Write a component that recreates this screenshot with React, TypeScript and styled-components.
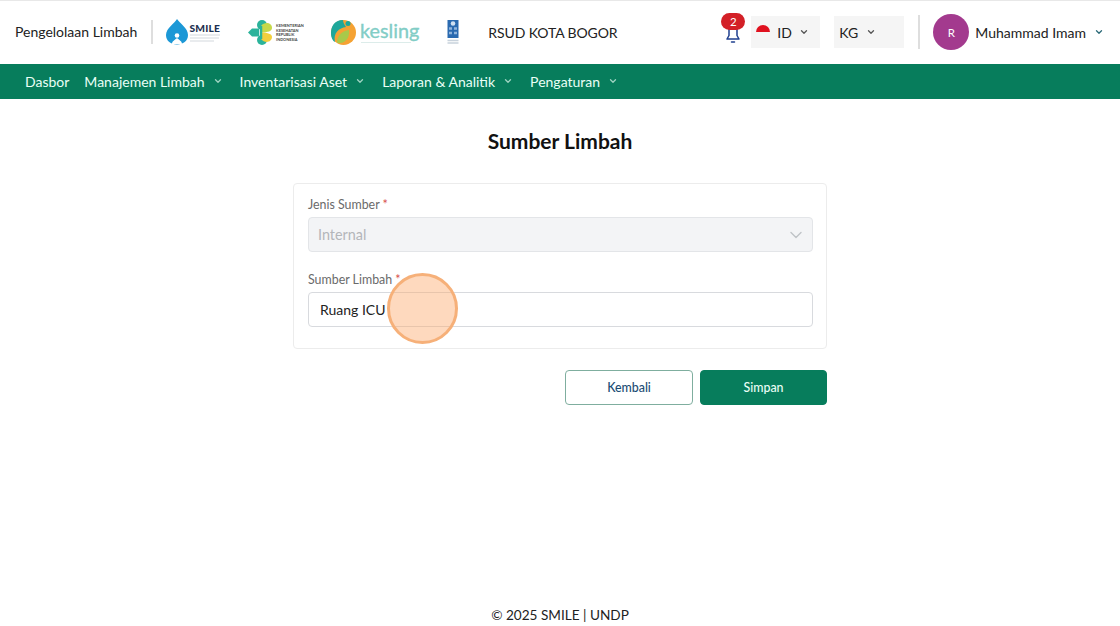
import React from "react";
import styled, { createGlobalStyle } from "styled-components";

const Global = createGlobalStyle`
  html, body { margin: 0; padding: 0; background: #fff; }
  body { font-family: Lato, "Liberation Sans", sans-serif; color: #1d1d1d; }
  * { box-sizing: border-box; }
`;
const Page = styled.div`
  position: relative; width: 1120px; height: 626px; overflow: hidden;
  display: flex; flex-direction: column; background: #fff;
`;
const Header = styled.header`
  height: 64px; flex: none; display: flex; align-items: center;
  border-top: 1px solid #e8e8e8; padding: 0 16px 1px 15px;
`;
const AppName = styled.span`font-size: 14px; line-height: 20px; color: #222; white-space: nowrap;`;
const VLine = styled.span<{ $h: number; $mx: string }>`
  width: 2px; height: ${p => p.$h}px; margin: ${p => p.$mx}; background: #dedede; flex: none;
`;
const LogoSlot = styled.span<{ $w: number; $mr: number }>`
  display: flex; width: ${p => p.$w}px; margin-right: ${p => p.$mr}px; flex: none;
`;
const Hospital = styled.span`font-size: 14px; color: #222; white-space: nowrap; letter-spacing: -0.1px;`;
const Right = styled.div`margin-left: auto; display: flex; align-items: center;`;
const BellWrap = styled.span`
  position: relative; width: 24px; height: 32px; display: flex; align-items: flex-end;
  justify-content: center; margin-right: 6px; padding-bottom: 3px;
`;
const Badge = styled.span`
  position: absolute; top: -3px; left: 0; width: 24px; height: 17px; border-radius: 9px;
  background: #d32027; color: #fff; font-size: 11.5px; line-height: 17px; text-align: center;
`;
const Picker = styled.div<{ $mr: number; $w: number }>`
  width: ${p => p.$w}px; height: 32px; background: #f5f5f5; display: flex; align-items: center;
  padding-left: 5px; margin-right: ${p => p.$mr}px; font-size: 14px; color: #222;
`;
const Flag = styled.span`
  width: 14px; height: 14px; border-radius: 50%; margin-right: 7px;
  background: linear-gradient(#e0121f 50%, #f6f6f6 50%);
`;
const ChevGap = styled.span<{ $w: number }>`width: ${p => p.$w}px; flex: none;`;
const Avatar = styled.span`
  width: 36px; height: 36px; border-radius: 50%; background: #a33a8e; color: #fff;
  display: flex; align-items: center; justify-content: center; font-size: 11.5px; margin-right: 6px;
`;
const UserName = styled.span`font-size: 14px; color: #222; margin-right: 8px; white-space: nowrap;`;
const Nav = styled.nav`
  height: 35px; flex: none; background: #077d5c; display: flex; align-items: center;
  padding: 0 0 1px 25px; color: #eafff6; font-size: 14px;
`;
const NavItem = styled.span<{ $mr: number }>`
  display: flex; align-items: center; gap: 8px; margin-right: ${p => p.$mr}px; white-space: nowrap;
`;
const Main = styled.main`flex: 1; display: flex; flex-direction: column; align-items: center;`;
const Title = styled.h1`
  margin: 30px 0 0; font-size: 21px; line-height: 24px; font-weight: 700; color: #111;
`;
const Card = styled.section`
  width: 534px; height: 166px; margin-top: 30px; border: 1px solid #ececec; border-radius: 4px;
  padding: 12px 13px 0 14px; display: flex; flex-direction: column;
`;
const Label = styled.label`font-size: 12.4px; line-height: 18px; color: #6a6a6a; margin-bottom: 3px;`;
const Star = styled.span`color: #d9534f;`;
const Select = styled.div`
  height: 35px; border: 1px solid #e3e5e8; border-radius: 4px; background: #f3f4f6;
  display: flex; align-items: center; justify-content: space-between; padding: 0 6px 0 9px;
  color: #b3b6ba; font-size: 14.4px; margin-bottom: 19px;
`;
const Input = styled.div`
  height: 35px; border: 1px solid #d8dade; border-radius: 4px; background: #fff;
  display: flex; align-items: center; padding: 0 11px; color: #222; font-size: 14px;
`;
const Actions = styled.div`width: 534px; margin-top: 21px; display: flex; justify-content: flex-end; gap: 7px;`;
const Btn = styled.button<{ $primary?: boolean }>`
  height: 35px; padding: 0 0 1px; width: ${p => (p.$primary ? 127 : 128)}px; border-radius: 4px; font: 500 12.4px Lato, sans-serif;
  border: 1px solid ${p => (p.$primary ? "#077d5c" : "#7fae9f")};
  background: ${p => (p.$primary ? "#077d5c" : "#fff")};
  color: ${p => (p.$primary ? "#eafff6" : "#1c4c74")};
`;
const Footer = styled.footer`
  flex: none; text-align: center; font-size: 13.6px; line-height: 20px; color: #222; height: 21px;
`;
const Cursor = styled.div`
  position: absolute; left: 387px; top: 273px; width: 71px; height: 71px; border-radius: 50%;
  background: rgba(252, 170, 110, 0.45); border: 3px solid #f6b079;
`;

const Chev = ({ c = "#555", s = 10, w = 1.3 }: { c?: string; s?: number; w?: number }) => (
  <svg width={s} height={s} viewBox="0 0 10 10" fill="none" stroke={c} strokeWidth={w} strokeLinecap="round" strokeLinejoin="round">
    <path d="M2.500 3.800 5 6.200 7.500 3.800" />
  </svg>
);
const Smile = () => (
  <svg width="55" height="26" viewBox="0 0 55 26">
    <path d="M11 0C9 4 0 9 0 16 0 22 5 25.500 11 25.500S22 22 22 16C22 9 13.500 4 11 0Z" fill="#1c98d6" />
    <path d="M6 25c0-3 3-4 5-6 2 2 5 3 5 6Z" fill="#fff" /><circle cx="11" cy="16.500" r="2.300" fill="#fff" />
    <text x="23.500" y="12.500" fontFamily="Lato" fontWeight="900" fontSize="10.200" fill="#1d3050" letterSpacing=".2">SMILE</text>
    <path d="M24 16h30M24 19h29M24 22h24" stroke="#d3d8dd" strokeWidth="1" />
  </svg>
);
const Kemkes = () => (
  <svg width="56" height="25" viewBox="0 0 56 25">
    <circle cx="14" cy="5" r="5" fill="#2bb39b" /><circle cx="14" cy="20" r="5" fill="#2bb39b" />
    <path d="M0 12.500 4 8.500h7v8H4Z" fill="#2bb39b" />
    <path d="M13 6c4-5 11-3 11 2 0 3-4 4.500-11 4.500Z" fill="#c6d84a" />
    <path d="M13 19c4 5 11 3 11-2 0-3-4-4.500-11-4.500Z" fill="#f2cf3c" />
    <path d="M13 6v13" stroke="#2bb39b" strokeWidth="2.500" />
    <g fontFamily="Lato" fontWeight="700" fontSize="3.900" fill="#444">
      <text x="28" y="7">KEMENTERIAN</text>
      <text x="28" y="11.500">KESEHATAN</text>
      <text x="28" y="16">REPUBLIK</text>
      <text x="28" y="20.500">INDONESIA</text>
    </g>
  </svg>
);
const Kesling = () => (
  <svg width="89" height="25" viewBox="0 0 89 25" overflow="visible">
    <circle cx="12.500" cy="12.500" r="12.500" fill="#f5a233" />
    <path d="M12 0C3 0 0 7 0 13c0 5 2 8 4 9C2 13 8 8 15 7 13 4 12 2 12 0Z" fill="#1ea79a" />
    <path d="M6 23c0-8 5-12 12-13 1 7-3 12-8 13Z" fill="#a8c94a" />
    <circle cx="17" cy="3.500" r="2.500" fill="#1ea79a" />
    <text x="29" y="18" fontFamily="Lato" fontSize="19.800" fill="#82cdc6" stroke="#82cdc6" strokeWidth=".35">kesling</text>
    <path d="M30 22.500h50" stroke="#dcecea" strokeWidth="1" />
  </svg>
);
const Undp = () => (
  <svg width="12" height="24" viewBox="0 0 12 24">
    <rect x="0.500" width="11" height="18" fill="#2a6ab0" />
    <circle cx="6" cy="3.500" r="2.300" fill="#cfe0f2" />
    <path d="M2 8.500h3M7 8.500h3M2 13h3M7 13h3" stroke="#8fb4dc" strokeWidth="2.500" />
    <path d="M0.500 20.500h11M0.500 23h11" stroke="#c8d2dc" strokeWidth="1.300" />
  </svg>
);
const Bell = () => (
  <svg width="16" height="20" viewBox="0 0 16 20" fill="none" stroke="#1f3f8f" strokeWidth="1.500" strokeLinejoin="round">
    <path d="M4 4v6.500L2 14h12l-2-3.500V4" /><path d="M6.500 17h3" strokeLinecap="round" />
  </svg>
);

export default function App() {
  return (
    <Page>
      <Global />
      <Header>
        <AppName>Pengelolaan Limbah</AppName>
        <VLine $h={24} $mx="0 13px 0 14px" />
        <LogoSlot $w={55} $mr={27}><Smile /></LogoSlot>
        <LogoSlot $w={56} $mr={27}><Kemkes /></LogoSlot>
        <LogoSlot $w={89} $mr={27}><Kesling /></LogoSlot>
        <LogoSlot $w={12} $mr={29}><Undp /></LogoSlot>
        <Hospital>RSUD KOTA BOGOR</Hospital>
        <Right>
          <BellWrap><Bell /><Badge>2</Badge></BellWrap>
          <Picker $mr={14} $w={69}><Flag />ID<ChevGap $w={7} /><Chev /></Picker>
          <Picker $mr={14} $w={70}>KG<ChevGap $w={8} /><Chev /></Picker>
          <VLine $h={34} $mx="0 13px 0 0" />
          <Avatar>R</Avatar>
          <UserName>Muhammad Imam</UserName>
          <Chev c="#2b6a78" />
        </Right>
      </Header>
      <Nav>
        <NavItem $mr={15}>Dasbor</NavItem>
        <NavItem $mr={17}>Manajemen Limbah <Chev c="#9fd3c2" /></NavItem>
        <NavItem $mr={17}>Inventarisasi Aset <Chev c="#9fd3c2" /></NavItem>
        <NavItem $mr={17}>Laporan &amp; Analitik <Chev c="#9fd3c2" /></NavItem>
        <NavItem $mr={0}>Pengaturan <Chev c="#9fd3c2" /></NavItem>
      </Nav>
      <Main>
        <Title>Sumber Limbah</Title>
        <Card>
          <Label>Jenis Sumber <Star>*</Star></Label>
          <Select>Internal<Chev c="#bfc3c7" s={20} w={.7} /></Select>
          <Label>Sumber Limbah <Star>*</Star></Label>
          <Input>Ruang ICU</Input>
        </Card>
        <Actions>
          <Btn>Kembali</Btn>
          <Btn $primary>Simpan</Btn>
        </Actions>
      </Main>
      <Footer>© 2025 SMILE | UNDP</Footer>
      <Cursor />
    </Page>
  );
}
